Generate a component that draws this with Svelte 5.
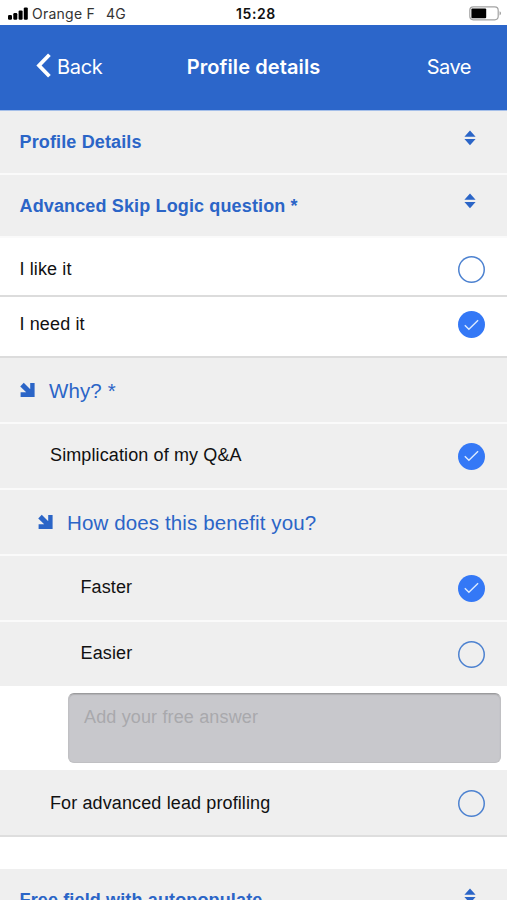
<script lang="ts">
	type Row = {
		kind: 'section' | 'option' | 'question' | 'input';
		label: string;
		level?: number;
		checked?: boolean;
		style?: string;
	};

	let rows: Row[] = [
		{ kind: 'section', label: 'Profile Details' },
		{ kind: 'section', label: 'Advanced Skip Logic question *', style: 'open' },
		{ kind: 'option', label: 'I like it', checked: false, style: 'plain first' },
		{ kind: 'option', label: 'I need it', checked: true, style: 'plain' },
		{ kind: 'question', label: 'Why? *', level: 0 },
		{ kind: 'option', label: 'Simplication of my Q&A', level: 1, checked: true },
		{ kind: 'question', label: 'How does this benefit you?', level: 1 },
		{ kind: 'option', label: 'Faster', level: 2, checked: true },
		{ kind: 'option', label: 'Easier', level: 2, checked: false, style: 'flush' },
		{ kind: 'input', label: 'Add your free answer' },
		{ kind: 'option', label: 'For advanced lead profiling', level: 1, checked: false, style: 'last' },
		{ kind: 'section', label: 'Free field with autopopulate' }
	];

	function toggle(row: Row) {
		row.checked = !row.checked;
		rows = rows;
	}
</script>

<div class="screen">
	<div class="status">
		<div class="carrier">
			<svg width="20" height="13" viewBox="0 0 20 13" aria-hidden="true">
				<rect x="0" y="8" width="4" height="4.7" rx="1.2" />
				<rect x="5.3" y="6" width="4" height="6.7" rx="1.2" />
				<rect x="10.6" y="3.4" width="4" height="9.3" rx="1.2" />
				<rect x="15.8" y="0.4" width="4" height="12.3" rx="1.2" />
			</svg>
			<span class="operator">Orange F</span>
			<span class="network">4G</span>
		</div>
		<span class="time">15:28</span>
		<svg class="battery" width="33" height="15" viewBox="0 0 33 15" aria-hidden="true">
			<rect x="0.8" y="0.8" width="28.4" height="13" rx="3.5" fill="none" stroke="#a3a3a3" stroke-width="1.2" />
			<rect x="2.4" y="2.4" width="14.8" height="9.8" rx="1" />
			<path d="M30.6 5.2c1.7.6 1.7 3.6 0 4.2z" fill="#8e8e8e" />
		</svg>
	</div>

	<header>
		<button class="back">
			<svg width="15" height="25" viewBox="0 0 15 25" aria-hidden="true">
				<path d="M13.4 1.7 3 12.5l10.4 10.8" fill="none" stroke="#fff" stroke-width="3.8" />
			</svg>
			<span>Back</span>
		</button>
		<h1>Profile details</h1>
		<button class="save">Save</button>
	</header>

	<main>
		{#each rows as row}
			{#if row.kind === 'section'}
				<div class="row section {row.style ?? ''}">
					<h2>{row.label}</h2>
					<svg width="12" height="16" viewBox="0 0 12 16" aria-hidden="true">
						<path d="M6 .4 11.6 6.8H.4zM.4 8.9h11.2L6 15.3z" fill="#2b65c7" />
					</svg>
				</div>
			{:else if row.kind === 'question'}
				<div class="row question level-{row.level}">
					<svg width="16" height="16" viewBox="0 0 16 16" aria-hidden="true">
						<path d="M2 2.6 10.5 11" stroke="#2b65c7" stroke-width="5" />
						<path d="M10.2 1H14.6V15H.6v-4.8h5.4L10.2 7z" fill="#2b65c7" />
					</svg>
					<h3>{row.label}</h3>
				</div>
			{:else if row.kind === 'input'}
				<div class="answer">
					<textarea placeholder={row.label}></textarea>
				</div>
			{:else}
				<div class="row option level-{row.level ?? 0} {row.style ?? ''}">
					<span>{row.label}</span>
					<button
						class="check"
						class:checked={row.checked}
						role="checkbox"
						aria-checked={row.checked}
						aria-label={row.label}
						on:click={() => toggle(row)}
					>
						{#if row.checked}
							<svg width="15" height="12" viewBox="0 0 15 12" aria-hidden="true">
								<path d="M.8 6.2 4.9 10.3 14.1 1.3" fill="none" stroke="#dcebff" stroke-width="1.4" />
							</svg>
						{/if}
					</button>
				</div>
			{/if}
		{/each}
	</main>
</div>

<style>
	:global(body) {
		margin: 0;
		background: #fff;
	}

	.screen {
		width: 100%;
		height: 900px;
		overflow: hidden;
		font-family: 'Liberation Sans', Arial, sans-serif;
		color: #111;
	}

	button {
		padding: 0;
		border: 0;
		background: none;
		color: inherit;
		font: inherit;
	}

	h1,
	h2,
	h3 {
		margin: 0;
	}

	.status {
		display: grid;
		grid-template-columns: 1fr auto 1fr;
		align-items: center;
		height: 25px;
		padding: 2px 5px 0 8px;
		box-sizing: border-box;
		font-family: Inter, sans-serif;
		font-size: 14px;
		line-height: 22px;
	}

	.carrier {
		display: flex;
		align-items: center;
	}

	.operator {
		margin-left: 4px;
		color: #333;
		letter-spacing: 0.25px;
	}

	.network {
		margin-left: 11px;
		color: #333;
		letter-spacing: 0.2px;
	}

	.time {
		padding-left: 2px;
		font-weight: 600;
		letter-spacing: 0.6px;
	}

	.battery {
		justify-self: end;
	}

	header {
		display: grid;
		grid-template-columns: 1fr auto 1fr;
		align-items: center;
		height: 86px;
		padding: 0 36px 2px;
		box-sizing: border-box;
		border-bottom: 1px solid #a5bfe9;
		background: #2c66ca;
		color: #fff;
		font-family: Inter, sans-serif;
		font-size: 20px;
	}

	.back {
		display: flex;
		align-items: center;
		gap: 6px;
		letter-spacing: -0.3px;
	}

	.back svg {
		margin-top: -2px;
	}

	h1 {
		font-size: 20px;
		font-weight: 600;
		letter-spacing: 0.1px;
	}

	.save {
		justify-self: end;
		letter-spacing: -0.5px;
	}

	.row {
		display: flex;
		align-items: center;
		height: 66px;
		padding: 0 22px 0 20px;
		box-sizing: border-box;
		border-bottom: 2px solid #fafafa;
		background: #efefef;
	}

	.section {
		height: 64px;
		padding-top: 1px;
		padding-right: 31px;
		justify-content: space-between;
		color: #2b65c7;
	}

	.section.open {
		height: 63px;
	}

	.section svg {
		margin-bottom: 10px;
	}

	h2 {
		margin-left: -0.5px;
		font-size: 18px;
		letter-spacing: 0.14px;
	}

	.question {
		color: #2b65c7;
	}

	.question.level-1 {
		padding-left: 38px;
	}

	h3 {
		margin-left: 13px;
		padding-top: 1px;
		font-size: 20.5px;
		font-weight: 400;
		letter-spacing: 0.12px;
	}

	.option {
		justify-content: space-between;
		font-size: 18px;
		letter-spacing: 0.12px;
	}

	.option span {
		padding-bottom: 1px;
	}

	.option.level-1 {
		padding-left: 50px;
	}

	.option.level-2 {
		padding-left: 80.5px;
	}

	.plain {
		height: 61px;
		padding-bottom: 4px;
		padding-left: 19.5px;
		border-bottom-color: #dcdcdc;
		background: #fff;
	}

	.plain.first {
		height: 59px;
		padding-top: 6px;
		padding-bottom: 0;
	}

	.flush {
		height: 64px;
		border-bottom: 0;
	}

	.last {
		height: 67px;
		margin-bottom: 32px;
		padding-top: 2px;
		border-bottom-color: #dedede;
	}

	.check {
		display: flex;
		align-items: center;
		justify-content: center;
		width: 27px;
		height: 27px;
		border-radius: 50%;
		box-shadow: inset 0 0 0 1.5px #4d82d0;
	}

	.check.checked {
		background: #3478f6;
		box-shadow: none;
	}

	.answer {
		height: 84px;
		padding: 7px 6px 7px 68px;
		box-sizing: border-box;
	}

	textarea {
		display: block;
		width: 100%;
		height: 70px;
		padding: 13px 15px;
		box-sizing: border-box;
		border: 1px solid #c0c0c3;
		border-top-color: #9b9b9d;
		border-radius: 6px;
		background: #c8c8cc;
		box-shadow: inset 0 1px 1px #b0b0b3;
		font: 18px 'Liberation Sans', Arial, sans-serif;
		letter-spacing: 0.15px;
		resize: none;
	}

	textarea::placeholder {
		color: #a9a9ac;
	}
</style>
